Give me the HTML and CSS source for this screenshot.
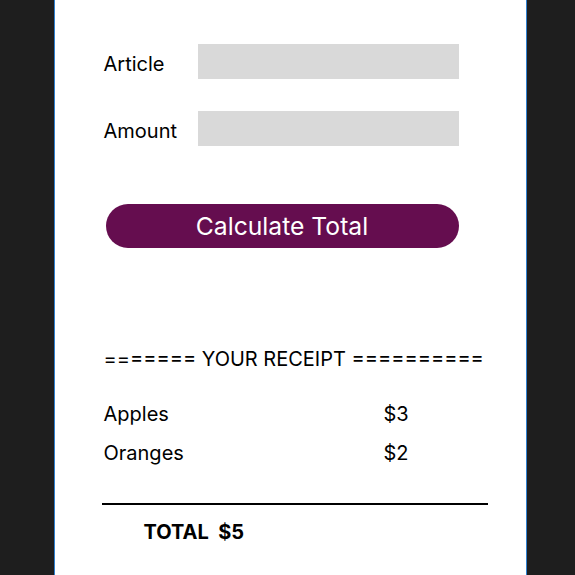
FILE: index.html
```html
<!DOCTYPE html>
<html>
<head>
<meta charset="utf-8">
<link rel="stylesheet" href="styles.css">
</head>
<body>
<div class="panel">
  <div class="form">
    <label class="label">Article</label>
    <div class="input"></div>
    <label class="label">Amount</label>
    <div class="input"></div>
  </div>
  <button class="btn">Calculate Total</button>
  <div class="header">======= YOUR RECEIPT ==========</div>
  <div class="items">
    <div class="item"><span class="name">Apples</span><span class="price">$3</span></div>
    <div class="item"><span class="name">Oranges</span><span class="price">$2</span></div>
  </div>
  <div class="rule"></div>
  <div class="total">TOTAL&nbsp; $5</div>
</div>
</body>
</html>
```
FILE: styles.css
```css
html, body {
  margin: 0;
  padding: 0;
  background: #1e1e1e;
  height: 575px;
  overflow: hidden;
}
.panel {
  box-sizing: border-box;
  margin-left: 54px;
  width: 473px;
  height: 575px;
  background: #fff;
  border-left: 1.5px solid #2f80d0;
  border-right: 1.5px solid #2f80d0;
  padding: 44px 0 0 48.5px;
  display: flex;
  flex-direction: column;
  align-items: flex-start;
  font-family: Inter, "Noto Sans", sans-serif;
  color: #000;
}
.form {
  display: grid;
  grid-template-columns: 94px 261px;
  row-gap: 32px;
  align-items: center;
}
.label {
  font-size: 20px;
  line-height: 24px;
  padding-top: 4px;
}
.input {
  height: 35px;
  background: #d9d9d9;
}
.btn {
  margin-top: 58px;
  margin-left: 2px;
  width: 353px;
  height: 44px;
  border: none;
  border-radius: 22px;
  background: #650d4f;
  color: #fff;
  font-family: Inter, "Noto Sans", sans-serif;
  font-size: 24.7px;
  padding: 0;
}
.header {
  margin-top: 99px;
  font-size: 20px;
  line-height: 24px;
  white-space: pre;
}
.items {
  margin-top: 31px;
  display: flex;
  flex-direction: column;
  gap: 15px;
}
.item {
  display: flex;
  font-size: 20px;
  line-height: 24px;
}
.name {
  width: 280px;
}
.rule {
  margin-top: 38px;
  margin-left: -2px;
  width: 386px;
  height: 2px;
  background: #000;
}
.total {
  margin-top: 15px;
  margin-left: 40px;
  font-size: 20px;
  line-height: 24px;
  font-weight: 700;
}
```
